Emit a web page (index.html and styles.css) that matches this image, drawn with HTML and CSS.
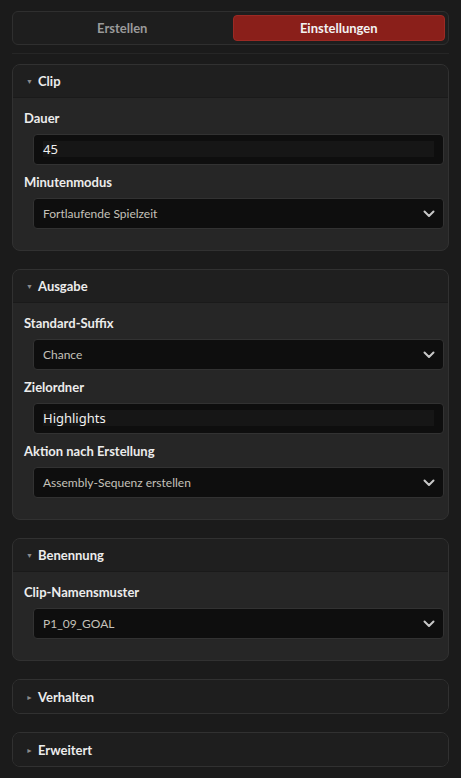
FILE: index.html
```html
<!DOCTYPE html>
<html lang="de">
<head>
<meta charset="utf-8">
<link rel="stylesheet" href="styles.css">
</head>
<body>
<div class="tabs">
  <button class="tab">Erstellen</button>
  <button class="tab active">Einstellungen</button>
</div>
<div class="sep"></div>

<section class="panel">
  <div class="panel-head"><span class="tri">▼</span>Clip</div>
  <div class="panel-body">
    <div class="label">Dauer</div>
    <div class="input"><span class="input-inner">45</span></div>
    <div class="label">Minutenmodus</div>
    <div class="select"><span>Fortlaufende Spielzeit</span><svg class="chev" viewBox="0 0 12 8" width="12" height="8"><path d="M1.5 1.5 L6 6 L10.5 1.5" fill="none" stroke="#c8c8c8" stroke-width="2" stroke-linecap="round" stroke-linejoin="round"/></svg></div>
  </div>
</section>

<section class="panel">
  <div class="panel-head"><span class="tri">▼</span>Ausgabe</div>
  <div class="panel-body">
    <div class="label">Standard-Suffix</div>
    <div class="select"><span>Chance</span><svg class="chev" viewBox="0 0 12 8" width="12" height="8"><path d="M1.5 1.5 L6 6 L10.5 1.5" fill="none" stroke="#c8c8c8" stroke-width="2" stroke-linecap="round" stroke-linejoin="round"/></svg></div>
    <div class="label">Zielordner</div>
    <div class="input"><span class="input-inner">Highlights</span></div>
    <div class="label">Aktion nach Erstellung</div>
    <div class="select"><span>Assembly-Sequenz erstellen</span><svg class="chev" viewBox="0 0 12 8" width="12" height="8"><path d="M1.5 1.5 L6 6 L10.5 1.5" fill="none" stroke="#c8c8c8" stroke-width="2" stroke-linecap="round" stroke-linejoin="round"/></svg></div>
  </div>
</section>

<section class="panel">
  <div class="panel-head"><span class="tri">▼</span>Benennung</div>
  <div class="panel-body">
    <div class="label">Clip-Namensmuster</div>
    <div class="select"><span>P1_09_GOAL</span><svg class="chev" viewBox="0 0 12 8" width="12" height="8"><path d="M1.5 1.5 L6 6 L10.5 1.5" fill="none" stroke="#c8c8c8" stroke-width="2" stroke-linecap="round" stroke-linejoin="round"/></svg></div>
  </div>
</section>

<section class="panel collapsed">
  <div class="panel-head"><span class="tri">►</span>Verhalten</div>
</section>

<section class="panel collapsed">
  <div class="panel-head"><span class="tri">►</span>Erweitert</div>
</section>
</body>
</html>
```

FILE: styles.css
```css
* { box-sizing: border-box; }
html, body { height: 100%; }
body {
  margin: 0;
  padding: 11px 12px 0;
  background: #1b1b1b;
  font-family: "Lato", "Open Sans", sans-serif;
  color: #e6e6e6;
  font-size: 13px;
}
.tabs {
  display: grid;
  grid-template-columns: 1fr 1fr;
  gap: 4px;
  height: 34px;
  padding: 3px;
  border: 1px solid #2f2f2f;
  border-radius: 6px;
  background: #1e1e1e;
}
.tab {
  border: 0;
  border-radius: 4px;
  background: transparent;
  color: #9a9a9a;
  font-family: inherit;
  font-size: 13px;
  font-weight: 700;
  padding: 0;
}
.tab.active {
  background: #8a1f1a;
  color: #f2f2f2;
  border: 1px solid #9b2a24;
}
.sep {
  height: 1px;
  background: #262626;
  margin: 8px 0 10px;
}
.panel {
  border: 1px solid #313131;
  border-radius: 8px;
  background: #262626;
  margin-bottom: 18px;
  overflow: hidden;
}
.panel-head {
  height: 33px;
  display: flex;
  align-items: center;
  padding-left: 13px;
  background: #1f1f1f;
  font-weight: 700;
  font-size: 13px;
  color: #ececec;
  border-bottom: 1px solid #1a1a1a;
}
.collapsed .panel-head { border-bottom: 0; background: #1e1e1e; }
.tri {
  font-size: 7px;
  color: #8a8a8a;
  width: 12px;
  display: inline-block;
}
.panel-body {
  padding: 11px 4px 21px 11px;
}
.label {
  height: 18px;
  line-height: 18px;
  font-weight: 700;
  font-size: 13px;
  color: #ececec;
  margin-bottom: 7px;
}
.input, .select {
  margin-left: 9px;
  height: 31px;
  border: 1px solid #323232;
  border-radius: 4px;
  background: #0e0e0e;
  margin-bottom: 8px;
}
.panel-body > :last-child { margin-bottom: 0; }
.input {
  padding: 6px 9px;
}
.input-inner {
  display: block;
  height: 16px;
  line-height: 16px;
  background: #161616;
  color: #f0f0f0;
  font-size: 13px;
  font-family: "Noto Sans", sans-serif;
}
.select {
  display: flex;
  align-items: center;
  justify-content: space-between;
  padding: 0 8px 0 9px;
  font-size: 12px;
  color: #c5c2ba;
}
.chev { display: block; }
```
